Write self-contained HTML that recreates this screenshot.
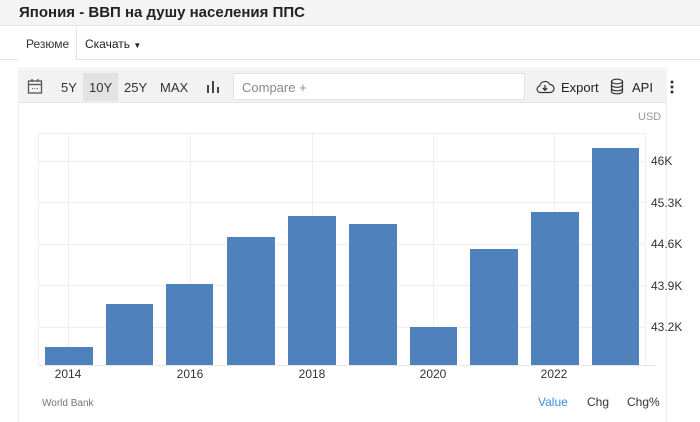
<!DOCTYPE html>
<html><head><meta charset="utf-8"><style>
*{margin:0;padding:0;box-sizing:border-box}
body{width:700px;height:422px;background:#fff;font-family:"Liberation Sans",sans-serif;position:relative;overflow:hidden;color:#222}
.a{position:absolute}
</style></head><body>
<div class="a" style="left:0;top:0;width:700px;height:26px;background:#f4f4f4;border-bottom:1px solid #e6e6e6"></div>
<div class="a" style="left:19px;top:4px;font-size:15px;font-weight:bold;color:#222">Япония - ВВП на душу населения ППС</div>
<div class="a" style="left:0;top:59px;width:700px;height:1px;background:#e3e3e3"></div>
<div class="a" style="left:18px;top:27px;width:59px;height:33px;background:#fff;border-right:1px solid #e3e3e3"></div>
<div class="a" style="left:26px;top:37px;font-size:12px;color:#333">Резюме</div>
<div class="a" style="left:85px;top:37px;font-size:12px;color:#222">Скачать <span style="font-size:8px">▼</span></div>

<div class="a" style="left:18px;top:68px;width:649px;height:354px;border:1px solid #eee;border-bottom:none"></div>
<div class="a" style="left:18px;top:70px;width:649px;height:33px;background:#f2f2f2;border-bottom:1px solid #e6e6e6"></div>
<svg class="a" style="left:27px;top:78px" width="16" height="17" viewBox="0 0 16 17"><rect x="1.5" y="3" width="13" height="12" fill="none" stroke="#555" stroke-width="1.3"/><line x1="1.5" y1="6.5" x2="14.5" y2="6.5" stroke="#555" stroke-width="1.3"/><line x1="5" y1="1" x2="5" y2="4" stroke="#555" stroke-width="1.3"/><line x1="11" y1="1" x2="11" y2="4" stroke="#555" stroke-width="1.3"/><rect x="5" y="10" width="1" height="1" fill="#555"/><rect x="7.5" y="10" width="1" height="1" fill="#555"/><rect x="10" y="10" width="1" height="1" fill="#555"/></svg>
<div class="a" style="left:83px;top:73px;width:35px;height:28px;background:#e2e2e2"></div>
<div class="a" style="left:61px;top:80px;font-size:13px;color:#333">5Y</div>
<div class="a" style="left:89px;top:80px;font-size:13px;color:#333">10Y</div>
<div class="a" style="left:124px;top:80px;font-size:13px;color:#333">25Y</div>
<div class="a" style="left:160px;top:80px;font-size:13px;color:#333">MAX</div>
<svg class="a" style="left:206px;top:80px" width="14" height="13"><rect x="1" y="5" width="2" height="8" fill="#444"/><rect x="6" y="1" width="2" height="12" fill="#444"/><rect x="11" y="7" width="2" height="6" fill="#444"/></svg>
<div class="a" style="left:233px;top:73px;width:292px;height:27px;background:#fff;border:1px solid #e2e2e2"></div>
<div class="a" style="left:242px;top:80px;font-size:13px;color:#888">Compare +</div>
<svg class="a" style="left:535px;top:79px" width="20" height="15" viewBox="0 0 20 15"><path d="M5 13.5H15a4 4 0 0 0 0-8 5.5 5.5 0 0 0-10.3 1.5A3.3 3.3 0 0 0 5 13.5z" fill="none" stroke="#333" stroke-width="1.2"/><path d="M10 6v5M7.8 9l2.2 2.2L12.2 9" fill="none" stroke="#333" stroke-width="1.3"/></svg>
<div class="a" style="left:561px;top:80px;font-size:13px;color:#222">Export</div>
<svg class="a" style="left:610px;top:78px" width="14" height="17" viewBox="0 0 14 17"><ellipse cx="7" cy="3.5" rx="5.5" ry="2.3" fill="none" stroke="#333" stroke-width="1.2"/><path d="M1.5 3.5v10c0 1.3 2.5 2.3 5.5 2.3s5.5-1 5.5-2.3v-10M1.5 7c0 1.3 2.5 2.3 5.5 2.3S12.5 8.3 12.5 7M1.5 10.5c0 1.3 2.5 2.3 5.5 2.3s5.5-1 5.5-2.3" fill="none" stroke="#333" stroke-width="1.2"/></svg>
<div class="a" style="left:632px;top:80px;font-size:13px;color:#222">API</div>
<svg class="a" style="left:670px;top:80px" width="4" height="14"><circle cx="2" cy="2" r="1.5" fill="#333"/><circle cx="2" cy="7" r="1.5" fill="#333"/><circle cx="2" cy="12" r="1.5" fill="#333"/></svg>

<div class="a" style="left:638px;top:111px;font-size:11px;color:#999">USD</div>
<svg class="a" style="left:0;top:0" width="700" height="422">
<g stroke="#eeeeee" stroke-width="1">
<line x1="38" y1="133.5" x2="646" y2="133.5"/>
<line x1="38.5" y1="133" x2="38.5" y2="365"/>
<line x1="38" y1="161.5" x2="646" y2="161.5"/>
<line x1="38" y1="202.5" x2="646" y2="202.5"/>
<line x1="38" y1="244.5" x2="646" y2="244.5"/>
<line x1="38" y1="285.5" x2="646" y2="285.5"/>
<line x1="38" y1="327.5" x2="646" y2="327.5"/>
<line x1="68.5" y1="133" x2="68.5" y2="365"/>
<line x1="190.5" y1="133" x2="190.5" y2="365"/>
<line x1="312.5" y1="133" x2="312.5" y2="365"/>
<line x1="433.5" y1="133" x2="433.5" y2="365"/>
<line x1="554.5" y1="133" x2="554.5" y2="365"/>
<line x1="645.5" y1="133" x2="645.5" y2="365"/>
<line x1="38" y1="365.5" x2="656" y2="365.5" stroke="#e6e6e6"/>
</g>
<g fill="#4f81bd">
<rect x="45" y="347" width="48" height="18"/>
<rect x="106" y="304" width="47" height="61"/>
<rect x="166" y="284" width="47" height="81"/>
<rect x="227" y="237" width="48" height="128"/>
<rect x="288" y="216" width="48" height="149"/>
<rect x="349" y="224" width="48" height="141"/>
<rect x="410" y="327" width="47" height="38"/>
<rect x="470" y="249" width="48" height="116"/>
<rect x="531" y="212" width="48" height="153"/>
<rect x="592" y="148" width="47" height="217"/>
</g>
<g font-family="Liberation Sans" font-size="12" fill="#333">
<text x="651" y="165">46K</text>
<text x="651" y="207">45.3K</text>
<text x="651" y="248">44.6K</text>
<text x="651" y="290">43.9K</text>
<text x="651" y="331">43.2K</text>
<text x="68" y="378" text-anchor="middle">2014</text>
<text x="190" y="378" text-anchor="middle">2016</text>
<text x="312" y="378" text-anchor="middle">2018</text>
<text x="433" y="378" text-anchor="middle">2020</text>
<text x="554" y="378" text-anchor="middle">2022</text>
</g>
<text x="42" y="406" font-family="Liberation Sans" font-size="10" fill="#777">World Bank</text>
<g font-family="Liberation Sans" font-size="12">
<text x="538" y="406" fill="#3d8ee0">Value</text>
<text x="587" y="406" fill="#333">Chg</text>
<text x="627" y="406" fill="#333">Chg%</text>
</g>
</svg>
</body></html>
